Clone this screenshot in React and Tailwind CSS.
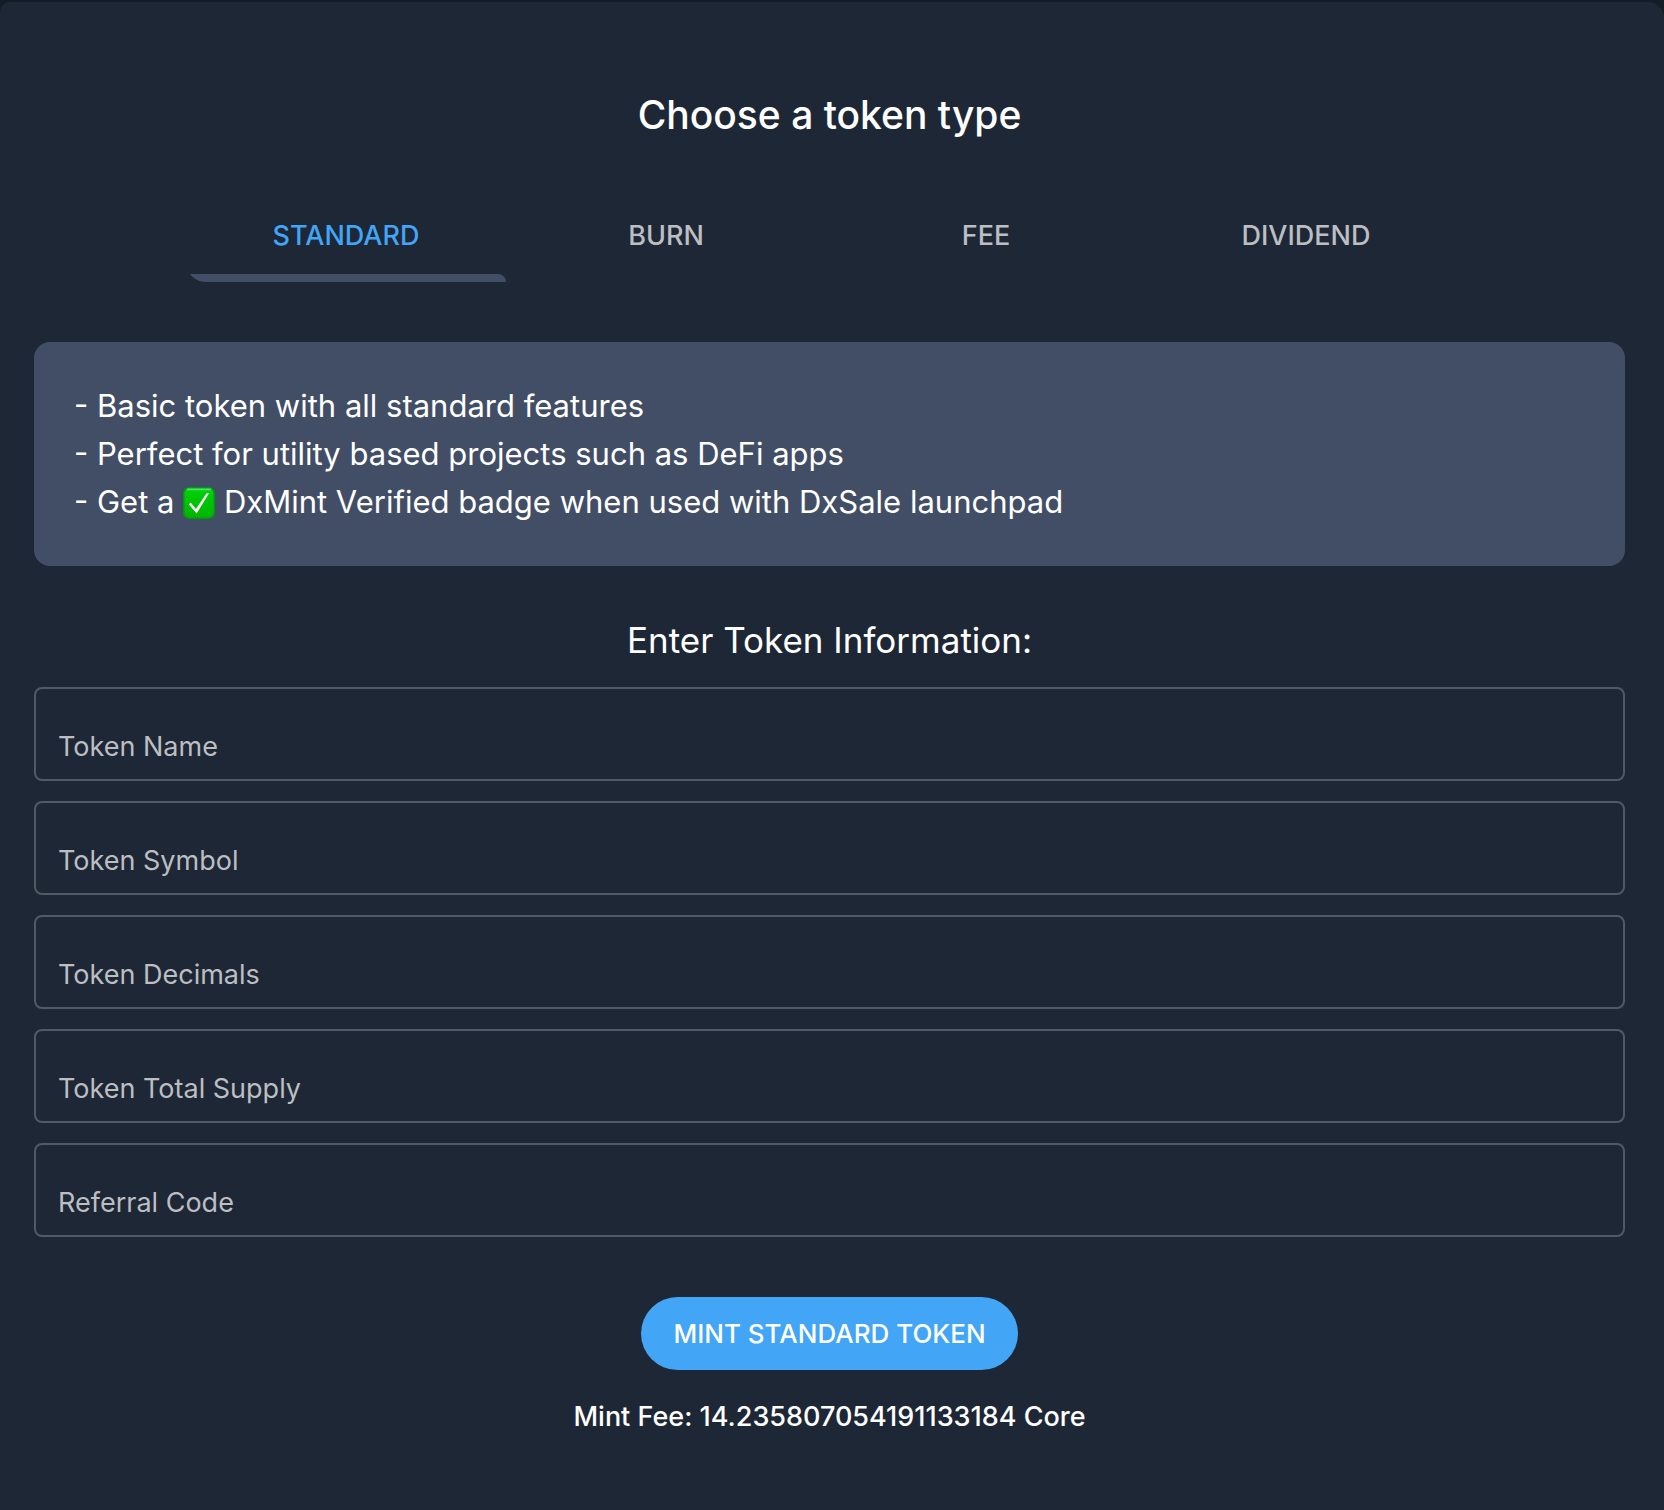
import { useState } from "react";

const tabs = ["STANDARD", "BURN", "FEE", "DIVIDEND"];

const fields = [
  { id: "token-name", label: "Token Name" },
  { id: "token-symbol", label: "Token Symbol" },
  { id: "token-decimals", label: "Token Decimals" },
  { id: "token-supply", label: "Token Total Supply" },
  { id: "referral-code", label: "Referral Code" },
];

function CheckBadge() {
  return (
    <svg viewBox="0 0 32 32" className="inline-block size-8 align-[-6px]" role="img" aria-label="check mark">
      <defs>
        <linearGradient id="badge" x1="0" y1="0" x2="0" y2="1">
          <stop offset="0" stopColor="#00d20a" />
          <stop offset="1" stopColor="#00b400" />
        </linearGradient>
      </defs>
      <rect x="0.75" y="0.75" width="30.5" height="30.5" rx="5.5" fill="url(#badge)" stroke="#0b9316" strokeWidth="1.5" />
      <path d="M4.5 2.4h23" stroke="#4fdc72" strokeWidth="1.6" strokeLinecap="round" />
      <path d="M5.8 17.2l1.9-1.6 5.2 6.4L23.6 6.2l2.4.1L13.6 26.6z" fill="#fff" />
    </svg>
  );
}

export default function App() {
  const [active, setActive] = useState("STANDARD");

  return (
    <div className="min-h-screen bg-[#141c27] pt-0.5 font-['Inter',sans-serif] text-white">
      <main className="flex min-h-[calc(100vh-2px)] flex-col rounded-tl-[10px] rounded-tr-[16px] bg-[#1e2736] pt-[89px] pr-[39px] pb-[70px] pl-[34px]">
        <h1 className="text-center text-[39px] leading-[48px] font-medium">Choose a token type</h1>

        <div className="mt-[59px] pr-[7px]">
          <div role="tablist" className="mx-auto grid max-w-[1280px] grid-cols-4">
            {tabs.map((tab) => (
              <button
                key={tab}
                type="button"
                role="tab"
                aria-selected={active === tab}
                onClick={() => setActive(tab)}
                className={`flex flex-col overflow-hidden rounded-bl-[20px] text-[27px] leading-[36px] font-medium ${
                  active === tab ? "text-[#42a5f5]" : "text-[#bcbec2]"
                }`}
              >
                <span className="w-full py-5 text-center">{tab}</span>
                <span className={`h-2 w-full rounded-tr-lg ${active === tab ? "bg-[#424e66]" : ""}`} />
              </button>
            ))}
          </div>
        </div>

        <div className="mt-[60px] rounded-2xl bg-[#424e66] p-10 text-[31px] leading-[48px]">
          <p>- Basic token with all standard features</p>
          <p>- Perfect for utility based projects such as DeFi apps</p>
          <p>
            - Get a <CheckBadge /> DxMint Verified badge when used with DxSale launchpad
          </p>
        </div>

        <h2 className="mt-[52px] text-center text-[35px] leading-[44px]">Enter Token Information:</h2>

        <form className="mt-[25px] flex flex-col" onSubmit={(e) => e.preventDefault()}>
          <div className="flex flex-col gap-5">
            {fields.map((f) => (
              <div key={f.id} className="grid">
                <input
                  id={f.id}
                  type="text"
                  placeholder=" "
                  className="peer col-start-1 row-start-1 h-[94px] w-full rounded-lg border-2 border-[#515964] bg-transparent px-[22px] pt-[24px] text-[27px] outline-none focus:border-[#42a5f5]"
                />
                <label
                  htmlFor={f.id}
                  className="pointer-events-none col-start-1 row-start-1 self-start px-6 pt-[42px] text-[27px] leading-[36px] text-[#bcbec2] peer-focus:pt-2 peer-focus:text-xl peer-[:not(:placeholder-shown)]:pt-2 peer-[:not(:placeholder-shown)]:text-xl"
                >
                  {f.label}
                </label>
              </div>
            ))}
          </div>
          <button
            type="submit"
            className="mt-[60px] self-center rounded-full bg-[#42a5f5] px-8 pt-[19px] pb-[18px] text-[26px] leading-[36px] font-medium"
          >
            MINT STANDARD TOKEN
          </button>
        </form>

        <p className="mt-[29px] text-center text-[27px] leading-[36px] font-medium">Mint Fee: 14.235807054191133184 Core</p>
      </main>
    </div>
  );
}
